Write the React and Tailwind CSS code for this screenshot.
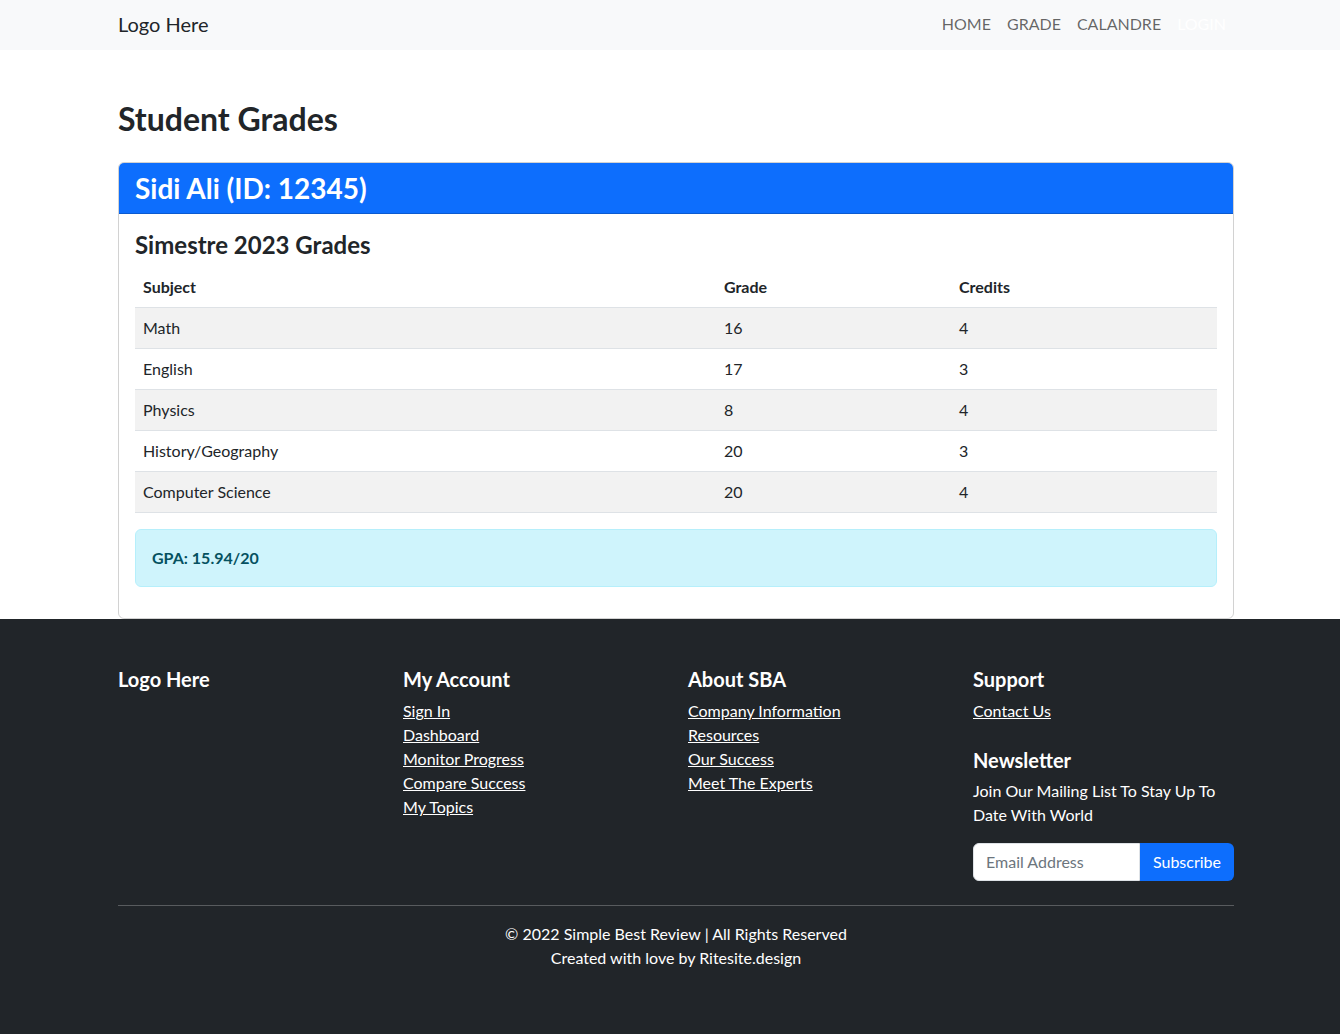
import React from "react";

const rows = [
  ["Math", "16", "4"],
  ["English", "17", "3"],
  ["Physics", "8", "4"],
  ["History/Geography", "20", "3"],
  ["Computer Science", "20", "4"],
];

export default function App() {
  return (
    <div className="min-h-[1034px] flex flex-col bg-white text-[#212529] text-base" style={{ fontFamily: 'Lato, "Noto Sans", sans-serif' }}>
      <nav className="bg-[#f8f9fa] h-[50px]">
        <div className="w-[1116px] ml-[118px] h-full flex items-center justify-between pb-[3px]">
          <span className="text-[20px] leading-[30px]">Logo Here</span>
          <ul className="flex text-black/60">
            <li className="px-2 leading-6">HOME</li>
            <li className="px-2 leading-6">GRADE</li>
            <li className="px-2 leading-6">CALANDRE</li>
            <li className="px-2 leading-6 text-white">LOGIN</li>
          </ul>
        </div>
      </nav>

      <main className="w-[1116px] ml-[118px] pt-[50px]">
        <h2 className="text-[32px] leading-[38px] font-bold mb-6">Student Grades</h2>
        <div className="border border-black/[0.175] rounded-md overflow-hidden">
          <div className="bg-[#0d6efd] text-white px-4 py-2 border-b border-black/[0.175]">
            <h3 className="text-[28px] leading-[34px] font-bold">Sidi Ali (ID: 12345)</h3>
          </div>
          <div className="p-4">
            <h4 className="text-[24px] leading-[29px] font-bold mb-2">Simestre 2023 Grades</h4>
            <table className="w-full mb-4 border-collapse text-left">
              <thead>
                <tr className="border-b border-[#dee2e6]">
                  <th className="w-[581px] px-2 py-2 leading-6 font-bold">Subject</th>
                  <th className="w-[235px] px-2 py-2 leading-6 font-bold">Grade</th>
                  <th className="px-2 py-2 leading-6 font-bold">Credits</th>
                </tr>
              </thead>
              <tbody>
                {rows.map((r, i) => (
                  <tr key={r[0]} className={"border-b border-[#dee2e6] " + (i % 2 === 0 ? "bg-[#f2f2f2]" : "bg-white")}>
                    <td className="px-2 py-2 leading-6">{r[0]}</td>
                    <td className="px-2 py-2 leading-6">{r[1]}</td>
                    <td className="px-2 py-2 leading-6">{r[2]}</td>
                  </tr>
                ))}
              </tbody>
            </table>
            <div className="bg-[#cff4fc] border border-[#b6effb] text-[#055160] rounded-md p-4 mb-[15px] leading-6 font-bold">
              GPA: 15.94/20
            </div>
          </div>
        </div>
      </main>

      <footer className="bg-[#212529] text-white flex-1 pt-12 pb-16">
        <div className="w-[1116px] ml-[118px]">
          <div className="grid grid-cols-[285px_285px_285px_261px]">
            <div>
              <h5 className="text-[20px] leading-6 font-bold mb-2">Logo Here</h5>
            </div>
            <div>
              <h5 className="text-[20px] leading-6 font-bold mb-2">My Account</h5>
              <ul className="leading-6">
                <li className="underline">Sign In</li>
                <li className="underline">Dashboard</li>
                <li className="underline">Monitor Progress</li>
                <li className="underline">Compare Success</li>
                <li className="underline">My Topics</li>
              </ul>
            </div>
            <div>
              <h5 className="text-[20px] leading-6 font-bold mb-2">About SBA</h5>
              <ul className="leading-6">
                <li className="underline">Company Information</li>
                <li className="underline">Resources</li>
                <li className="underline">Our Success</li>
                <li className="underline">Meet The Experts</li>
              </ul>
            </div>
            <div>
              <h5 className="text-[20px] leading-6 font-bold mb-2">Support</h5>
              <ul className="leading-6 mb-[25px]">
                <li className="underline">Contact Us</li>
              </ul>
              <h5 className="text-[20px] leading-6 font-bold mb-[7px]">Newsletter</h5>
              <p className="leading-6 mb-4 w-[261px]">Join Our Mailing List To Stay Up To Date With World</p>
              <div className="flex h-[38px]">
                <div className="w-[167px] bg-white rounded-l-md border border-[#dee2e6] px-3 flex items-center text-[#6c757d]">Email Address</div>
                <div className="flex-1 bg-[#0d6efd] rounded-r-md flex items-center justify-center">Subscribe</div>
              </div>
            </div>
          </div>
          <div className="border-t border-white/25 mt-6 mb-4"></div>
          <div className="text-center leading-6">
            <p>© 2022 Simple Best Review | All Rights Reserved</p>
            <p>Created with love by Ritesite.design</p>
          </div>
        </div>
      </footer>
    </div>
  );
}
